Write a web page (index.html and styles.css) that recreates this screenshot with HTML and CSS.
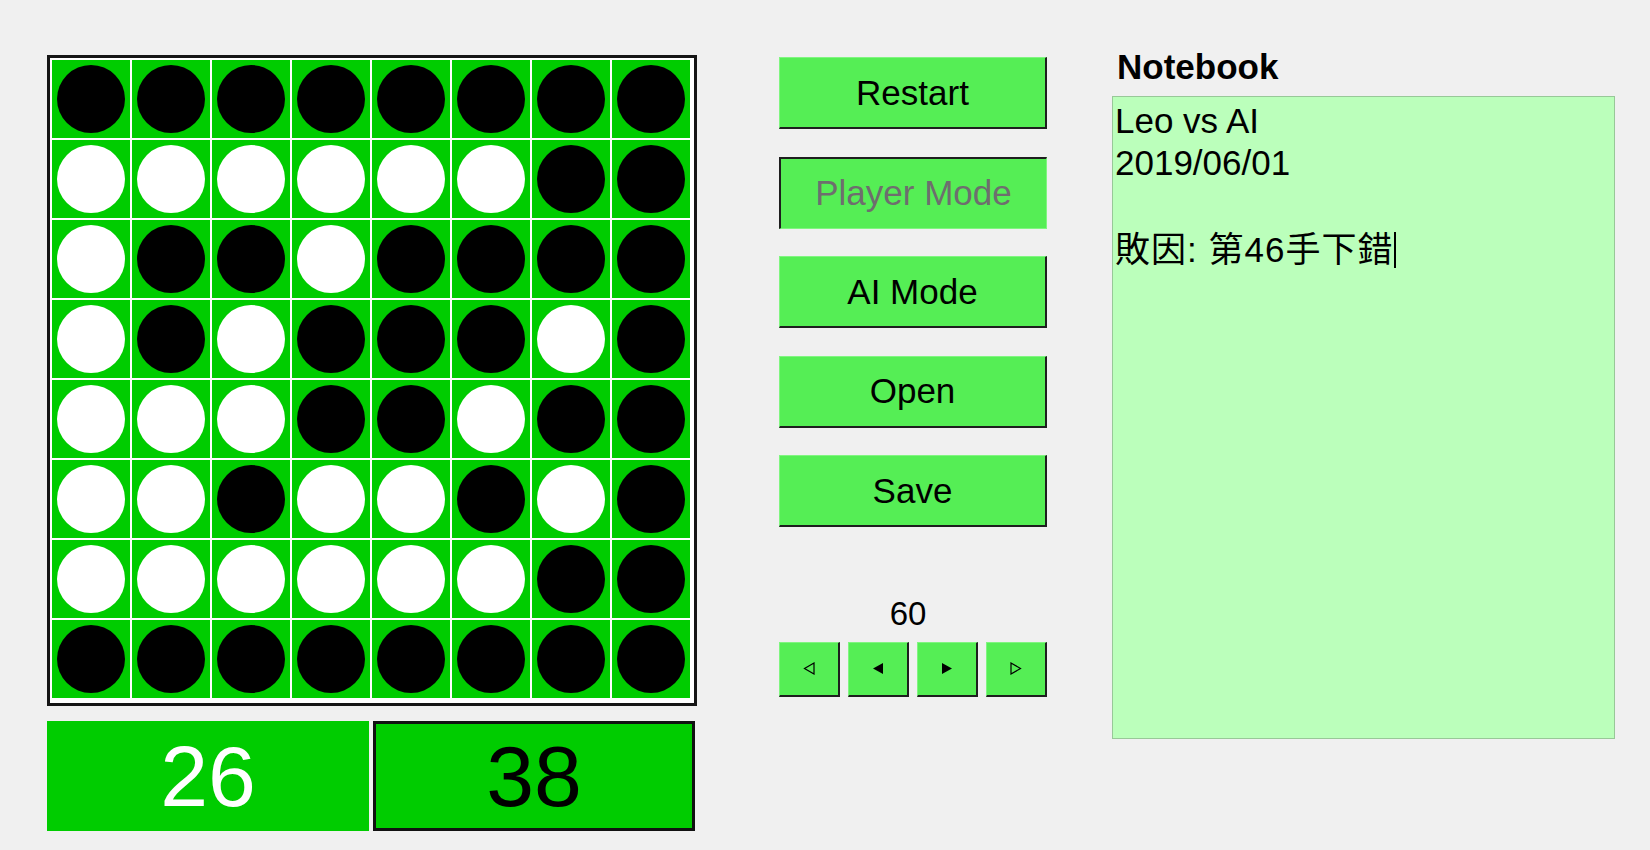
FILE: index.html
```html
<!DOCTYPE html>
<html lang="zh-Hant">
<head>
<meta charset="utf-8">
<title>Othello</title>
<link rel="stylesheet" href="styles.css">
</head>
<body>
<div class="app">
  <div class="board-col">
    <div class="board">
      <div class="cell"><span class="disc b"></span></div><div class="cell"><span class="disc b"></span></div><div class="cell"><span class="disc b"></span></div><div class="cell"><span class="disc b"></span></div><div class="cell"><span class="disc b"></span></div><div class="cell"><span class="disc b"></span></div><div class="cell"><span class="disc b"></span></div><div class="cell"><span class="disc b"></span></div>
      <div class="cell"><span class="disc w"></span></div><div class="cell"><span class="disc w"></span></div><div class="cell"><span class="disc w"></span></div><div class="cell"><span class="disc w"></span></div><div class="cell"><span class="disc w"></span></div><div class="cell"><span class="disc w"></span></div><div class="cell"><span class="disc b"></span></div><div class="cell"><span class="disc b"></span></div>
      <div class="cell"><span class="disc w"></span></div><div class="cell"><span class="disc b"></span></div><div class="cell"><span class="disc b"></span></div><div class="cell"><span class="disc w"></span></div><div class="cell"><span class="disc b"></span></div><div class="cell"><span class="disc b"></span></div><div class="cell"><span class="disc b"></span></div><div class="cell"><span class="disc b"></span></div>
      <div class="cell"><span class="disc w"></span></div><div class="cell"><span class="disc b"></span></div><div class="cell"><span class="disc w"></span></div><div class="cell"><span class="disc b"></span></div><div class="cell"><span class="disc b"></span></div><div class="cell"><span class="disc b"></span></div><div class="cell"><span class="disc w"></span></div><div class="cell"><span class="disc b"></span></div>
      <div class="cell"><span class="disc w"></span></div><div class="cell"><span class="disc w"></span></div><div class="cell"><span class="disc w"></span></div><div class="cell"><span class="disc b"></span></div><div class="cell"><span class="disc b"></span></div><div class="cell"><span class="disc w"></span></div><div class="cell"><span class="disc b"></span></div><div class="cell"><span class="disc b"></span></div>
      <div class="cell"><span class="disc w"></span></div><div class="cell"><span class="disc w"></span></div><div class="cell"><span class="disc b"></span></div><div class="cell"><span class="disc w"></span></div><div class="cell"><span class="disc w"></span></div><div class="cell"><span class="disc b"></span></div><div class="cell"><span class="disc w"></span></div><div class="cell"><span class="disc b"></span></div>
      <div class="cell"><span class="disc w"></span></div><div class="cell"><span class="disc w"></span></div><div class="cell"><span class="disc w"></span></div><div class="cell"><span class="disc w"></span></div><div class="cell"><span class="disc w"></span></div><div class="cell"><span class="disc w"></span></div><div class="cell"><span class="disc b"></span></div><div class="cell"><span class="disc b"></span></div>
      <div class="cell"><span class="disc b"></span></div><div class="cell"><span class="disc b"></span></div><div class="cell"><span class="disc b"></span></div><div class="cell"><span class="disc b"></span></div><div class="cell"><span class="disc b"></span></div><div class="cell"><span class="disc b"></span></div><div class="cell"><span class="disc b"></span></div><div class="cell"><span class="disc b"></span></div>
    </div>
    <div class="scores">
      <div class="score score-white">26</div>
      <div class="score score-black">38</div>
    </div>
  </div>

  <div class="controls">
    <div class="btn">Restart</div>
    <div class="btn pressed">Player Mode</div>
    <div class="btn">AI Mode</div>
    <div class="btn">Open</div>
    <div class="btn">Save</div>
    <div class="move-label">60</div>
    <div class="nav">
      <div class="nav-btn"><svg width="12" height="13" viewBox="0 0 12 13"><path d="M11 1 L1.5 6.5 L11 12 Z" fill="none" stroke="#000" stroke-width="1.2" stroke-linejoin="miter"/></svg></div>
      <div class="nav-btn"><svg width="12" height="13" viewBox="0 0 12 13"><path d="M11 1 L1 6.5 L11 12 Z" fill="#000"/></svg></div>
      <div class="nav-btn"><svg width="12" height="13" viewBox="0 0 12 13"><path d="M1 1 L11 6.5 L1 12 Z" fill="#000"/></svg></div>
      <div class="nav-btn"><svg width="12" height="13" viewBox="0 0 12 13"><path d="M1 1 L10.5 6.5 L1 12 Z" fill="none" stroke="#000" stroke-width="1.2" stroke-linejoin="miter"/></svg></div>
    </div>
  </div>

  <div class="notebook">
    <div class="nb-title">Notebook</div>
    <div class="nb-text">
      <div class="nb-line">Leo vs AI</div>
      <div class="nb-line">2019/06/01</div>
      <div class="nb-line">&nbsp;</div>
      <div class="nb-line nb-cjk">敗因: 第46手下錯<span class="caret"></span></div>
    </div>
  </div>
</div>
</body>
</html>
```

FILE: styles.css
```css
html, body {
  margin: 0;
  padding: 0;
  background: #f0f0f0;
  font-family: "Liberation Sans", "Noto Sans CJK TC", Arial, sans-serif;
  color: #000;
}

.app {
  display: flex;
  align-items: flex-start;
  padding-left: 47px;
  width: 1650px;
  height: 850px;
  box-sizing: border-box;
}

.board-col {
  margin-top: 55px;
  width: 650px;
}

.board {
  box-sizing: border-box;
  width: 650px;
  height: 651px;
  border: 3px solid #151515;
  background: #ffffff;
  padding: 2px;
  display: grid;
  grid-template-columns: repeat(8, 78px);
  grid-template-rows: repeat(8, 78px);
  gap: 2px;
}

.cell {
  background: #00cc00;
  display: flex;
  align-items: center;
  justify-content: center;
}

.disc {
  display: block;
  width: 68px;
  height: 68px;
  border-radius: 50%;
}

.disc.b { background: #000; }
.disc.w { background: #fff; }

.scores {
  display: flex;
  gap: 4px;
  margin-top: 15px;
}

.score {
  box-sizing: border-box;
  width: 322px;
  height: 110px;
  background: #00cc00;
  display: flex;
  align-items: center;
  justify-content: center;
  font-size: 86px;
  line-height: 1;
}

.score-white {
  color: #ffffff;
}

.score-black {
  color: #000;
  border: 3px solid #111;
}

.controls {
  margin-left: 82px;
  margin-top: 57px;
  width: 268px;
  display: flex;
  flex-direction: column;
}

.btn {
  box-sizing: border-box;
  height: 72px;
  margin-bottom: 27.5px;
  background: #55ee55;
  border-style: solid;
  border-width: 1px 2px 2px 1px;
  border-color: #80f580 #1e1e1e #1e1e1e #80f580;
  display: flex;
  align-items: center;
  justify-content: center;
  font-size: 35px;
  color: #000;
}

.btn.pressed {
  border-width: 2px 1px 1px 2px;
  border-color: #1e1e1e #80f580 #80f580 #1e1e1e;
  color: #6e6e6e;
}

.move-label {
  margin-top: 40px;
  height: 38px;
  line-height: 38px;
  font-size: 33px;
  text-align: center;
  padding-right: 10px;
}

.nav {
  margin-top: 9px;
  display: flex;
  gap: 8px;
}

.nav-btn {
  box-sizing: border-box;
  width: 61px;
  height: 55px;
  background: #55ee55;
  border-style: solid;
  border-width: 1px 2px 2px 1px;
  border-color: #80f580 #1e1e1e #1e1e1e #80f580;
  display: flex;
  align-items: center;
  justify-content: center;
}

.nav-btn svg {
  display: block;
}

.notebook {
  margin-left: 65px;
  margin-top: 47px;
  width: 503px;
}

.nb-title {
  font-weight: bold;
  font-size: 35px;
  line-height: 40px;
  padding-left: 5px;
  margin-bottom: 9px;
}

.nb-text {
  box-sizing: border-box;
  height: 643px;
  background: #bbffbb;
  border: 1px solid #98c898;
  padding: 3px 2px;
  font-size: 35px;
  line-height: 42px;
}

.nb-line {
  white-space: nowrap;
}

.nb-cjk {
  margin-top: 3px;
  letter-spacing: 1px;
}

.caret {
  display: inline-block;
  width: 2px;
  height: 36px;
  background: #000;
  vertical-align: -6px;
  margin-left: 1px;
}
```
